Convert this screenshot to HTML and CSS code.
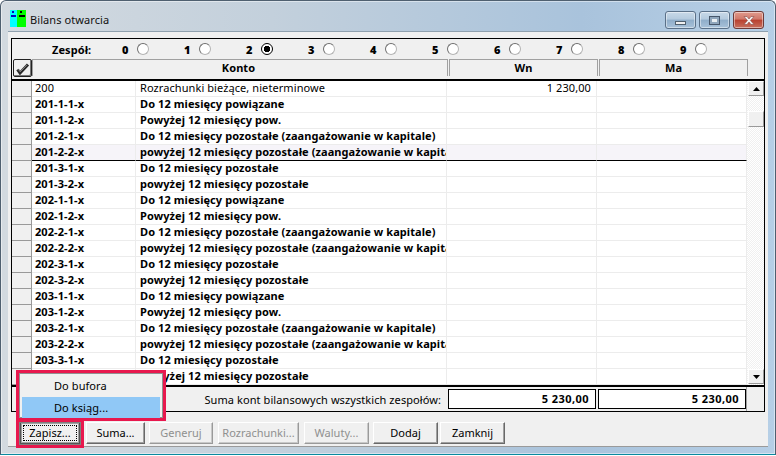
FILE: index.html
```html
<!DOCTYPE html>
<html lang="pl">
<head>
<meta charset="utf-8">
<title>Bilans otwarcia</title>
<link rel="stylesheet" href="styles.css">
</head>
<body>
<div class="window">
  <div class="titlebar">
    <svg class="appicon" width="17" height="17" viewBox="0 0 17 17"><rect width="7" height="17" fill="#00ffff"/><rect x="7" width="9" height="17" fill="#00ff00"/><rect x="2" y="1" width="2" height="2" fill="#0000c0"/><rect x="10" y="1" width="2" height="2" fill="#000"/><rect x="1" y="5" width="5" height="2" fill="#0000c0"/><rect x="9" y="5" width="6" height="2" fill="#000"/></svg>
    <span class="title">Bilans otwarcia</span>
    <div class="controls">
      <div class="ctl ctl-min"><span class="glyph-min"></span></div>
      <div class="ctl ctl-max"><span class="glyph-max"></span></div>
      <div class="ctl ctl-close"><svg width="18" height="11" viewBox="0 0 18 11"><path d="M4 1.5h3l2 2.500 2-2.500h3l-3.500 4 3.500 4h-3l-2-2.500-2 2.500H4l3.500-4z" fill="#f4f4f4" stroke="#8a4a44" stroke-width=".6"/></svg></div>
    </div>
  </div>
  <div class="client">
    <div class="panel">
      <div class="teams">
        <span class="teams-label">Zespół:</span>
        <span class="team"><b>0</b><i class="radio"></i></span>
        <span class="team"><b>1</b><i class="radio"></i></span>
        <span class="team"><b>2</b><i class="radio on"></i></span>
        <span class="team"><b>3</b><i class="radio"></i></span>
        <span class="team"><b>4</b><i class="radio"></i></span>
        <span class="team"><b>5</b><i class="radio"></i></span>
        <span class="team"><b>6</b><i class="radio"></i></span>
        <span class="team"><b>7</b><i class="radio"></i></span>
        <span class="team"><b>8</b><i class="radio"></i></span>
        <span class="team"><b>9</b><i class="radio"></i></span>
      </div>
      <div class="head">
        <div class="check"><svg width="15" height="13" viewBox="0 0 15 13"><path d="M2.500 7.500L5 11 13 2.500" fill="none" stroke="#2a2a2a" stroke-width="3"/><path d="M3.500 7.500L5.200 9.800 12 2.800" fill="none" stroke="#8c8c8c" stroke-width="1"/></svg></div>
        <div class="hcell h-konto">Konto</div>
        <div class="hcell h-num">Wn</div>
        <div class="hcell h-num">Ma</div>
      </div>
      <div class="gridwrap">
        <div class="rows">
          <div class="row plain"><i></i><span>200</span><span>Rozrachunki bieżące, nieterminowe</span><span class="num">1 230,00</span><span class="num"></span></div>
          <div class="row"><i></i><span>201-1-1-x</span><span>Do 12 miesięcy powiązane</span><span></span><span></span></div>
          <div class="row"><i></i><span>201-1-2-x</span><span>Powyżej 12 miesięcy pow.</span><span></span><span></span></div>
          <div class="row"><i></i><span>201-2-1-x</span><span>Do 12 miesięcy pozostałe (zaangażowanie w kapitale)</span><span></span><span></span></div>
          <div class="row current"><i></i><span>201-2-2-x</span><span>powyżej 12 miesięcy pozostałe (zaangażowanie w kapitale)</span><span></span><span></span></div>
          <div class="row"><i></i><span>201-3-1-x</span><span>Do 12 miesięcy pozostałe</span><span></span><span></span></div>
          <div class="row"><i></i><span>201-3-2-x</span><span>powyżej 12 miesięcy pozostałe</span><span></span><span></span></div>
          <div class="row"><i></i><span>202-1-1-x</span><span>Do 12 miesięcy powiązane</span><span></span><span></span></div>
          <div class="row"><i></i><span>202-1-2-x</span><span>Powyżej 12 miesięcy pow.</span><span></span><span></span></div>
          <div class="row"><i></i><span>202-2-1-x</span><span>Do 12 miesięcy pozostałe (zaangażowanie w kapitale)</span><span></span><span></span></div>
          <div class="row"><i></i><span>202-2-2-x</span><span>powyżej 12 miesięcy pozostałe (zaangażowanie w kapitale)</span><span></span><span></span></div>
          <div class="row"><i></i><span>202-3-1-x</span><span>Do 12 miesięcy pozostałe</span><span></span><span></span></div>
          <div class="row"><i></i><span>202-3-2-x</span><span>powyżej 12 miesięcy pozostałe</span><span></span><span></span></div>
          <div class="row"><i></i><span>203-1-1-x</span><span>Do 12 miesięcy powiązane</span><span></span><span></span></div>
          <div class="row"><i></i><span>203-1-2-x</span><span>Powyżej 12 miesięcy pow.</span><span></span><span></span></div>
          <div class="row"><i></i><span>203-2-1-x</span><span>Do 12 miesięcy pozostałe (zaangażowanie w kapitale)</span><span></span><span></span></div>
          <div class="row"><i></i><span>203-2-2-x</span><span>powyżej 12 miesięcy pozostałe (zaangażowanie w kapitale)</span><span></span><span></span></div>
          <div class="row"><i></i><span>203-3-1-x</span><span>Do 12 miesięcy pozostałe</span><span></span><span></span></div>
          <div class="row"><i></i><span>203-3-2-x</span><span>powyżej 12 miesięcy pozostałe</span><span></span><span></span></div>
        </div>
        <div class="scrollbar">
          <div class="sbtn"><svg width="7" height="4" viewBox="0 0 7 4"><path d="M3.500 0L7 4H0z"/></svg></div>
          <div class="thumb"></div>
          <div class="sbtn sbtn-down"><svg width="7" height="4" viewBox="0 0 7 4"><path d="M0 0h7L3.500 4z"/></svg></div>
        </div>
      </div>
      <div class="totals">
        <span class="totals-label">Suma kont bilansowych wszystkich zespołów:</span>
        <span class="total">5 230,00</span>
        <span class="total">5 230,00</span>
        <span class="totals-end"></span>
      </div>
    </div>
    <div class="buttons">
      <button class="btn b-zapisz focus"><span>Zapisz...</span></button>
      <button class="btn b-suma">Suma...</button>
      <button class="btn b-gen" disabled>Generuj</button>
      <button class="btn b-roz" disabled>Rozrachunki...</button>
      <button class="btn b-wal" disabled>Waluty...</button>
      <button class="btn b-dodaj">Dodaj</button>
      <button class="btn b-zamk">Zamknij</button>
    </div>
  </div>
</div>
<div class="menu">
  <div class="menu-item">Do bufora</div>
  <div class="menu-item selected">Do ksiąg...</div>
</div>
<div class="mark"></div>
</body>
</html>
```

FILE: styles.css
```css
* { box-sizing: border-box; }
html, body { margin: 0; padding: 0; background: #fff; }
body { width: 776px; height: 456px; position: relative; overflow: hidden; font-family: "Noto Sans", sans-serif; font-size: 11px; letter-spacing: .08px; color: #000; }
.window { width: 776px; height: 455px; display: flex; flex-direction: column; border: 1px solid #4f6070; border-bottom: 1px solid #0a8aa0; border-radius: 6px 6px 0 0; background: linear-gradient(90deg, #d3dae0 0, #c3d0dc 35%, #a9c3dc 75%, #b6cfe6 100%); padding: 0 7px 7px; box-shadow: inset 0 0 0 1px rgba(255,255,255,.45); }
.titlebar { height: 30px; flex: none; display: flex; align-items: flex-start; }
.appicon { margin: 9px 0 0 2px; flex: none; }
.title { margin: 11px 0 0 3px; line-height: 15px; color: #111; }
.controls { margin: 10px 4px 0 auto; display: flex; gap: 3px; }
.ctl { height: 18px; width: 31px; border: 1px solid #5a7088; border-radius: 3px; background: linear-gradient(#c8d9e8 0, #b4cade 45%, #8fadc9 50%, #a8c2da 100%); box-shadow: inset 0 0 0 1px rgba(255,255,255,.45); display: flex; align-items: center; justify-content: center; }
.ctl-close { border-color: #6e3a38; background: linear-gradient(#e09a8c 0, #d0786a 45%, #b8402f 50%, #c8705e 100%); }
.glyph-min { width: 11px; height: 4px; margin-top: 5px; background: #f0f0f0; border: 1px solid #50606e; }
.glyph-max { width: 11px; height: 9px; background: #e8eef2; border: 1px solid #46566a; box-shadow: inset 0 0 0 2px #8fa6bc; }
.client { flex: 1; background: #f0f0f0; border-top: 1px solid #8fa0ae; border-bottom: 1px solid #9a9a9a; padding: 6px 3px 0; }
.panel { border: 1px solid #000; width: 754px; }
.teams { height: 20px; display: flex; align-items: center; padding-left: 40px; font-weight: bold; }
.teams-label { width: 70px; }
.team { width: 62px; display: flex; align-items: center; flex: none; }
.team b { width: 15px; }
.radio { display: block; width: 12px; height: 12px; border-radius: 50%; background: #fff; border: 1px solid #6e6e6e; border-right-color: #b4b4b4; border-bottom-color: #b4b4b4; }
.radio.on { border: 1px solid #000; background: radial-gradient(circle, #000 0, #000 3px, #fff 3.5px); }
.head { height: 20px; display: flex; align-items: flex-start; }
.check { width: 19px; height: 18px; margin-left: 1px; background: #f0f0f0; border: 1px solid #222; border-radius: 2px; box-shadow: inset -1px -1px 0 #777; display: flex; align-items: center; justify-content: center; }
.hcell { height: 17px; border: 1px solid #a0a0a0; border-bottom: none; font-weight: bold; line-height: 16px; text-align: center; }
.h-konto { width: 416px; padding-right: 3px; }
.h-num { width: 149px; margin-left: 1px; }
.gridwrap { display: flex; border-top: 2px solid #000; }
.rows { width: 735px; flex: none; display: flex; flex-direction: column; }
.row { height: 16px; display: grid; grid-template-columns: 20px 104px 311px 150px 150px; background: #fff; font-weight: bold; line-height: 14px; }
.row span { padding: 0 3px; white-space: nowrap; overflow: hidden; border-right: 1px solid #ececec; border-bottom: 1px solid #ececec; }
.row span:nth-child(3) { padding-left: 4px; padding-right: 2px; }
.row i { display: block; background: #f0f0f0; border-right: 1px solid #999; border-bottom: 1px solid #999; }
.row.plain { font-weight: normal; }
.row .num { text-align: right; padding-right: 5px; }
.row.current { background: #f6f4f9; }
.row.current span { border-bottom-color: #000; }
.scrollbar { width: 17px; padding-left: 1px; display: flex; flex-direction: column; background: repeating-conic-gradient(#f0f0f0 0 25%, #fff 0 50%) 0 0 / 2px 2px; }
.sbtn { height: 15px; flex: none; background: #f0f0f0; border: 1px solid #9a9a9a; border-top-color: #fff; border-left-color: #fff; display: flex; align-items: center; justify-content: center; }
.sbtn-down { margin-top: auto; margin-bottom: 1px; }
.thumb { height: 16px; flex: none; margin-top: 15px; background: #f0f0f0; border: 1px solid #9a9a9a; border-top-color: #fff; border-left-color: #fff; }
.totals { height: 26px; border-top: 2px solid #000; display: flex; align-items: center; }
.totals-label { width: 431px; text-align: right; padding-right: 2px; flex: none; }
.total { width: 148px; height: 20px; flex: none; background: #fff; border: 1px solid #000; margin-left: 5px; font-weight: bold; letter-spacing: .45px; line-height: 18px; text-align: right; padding-right: 6px; }
.total + .total { margin-left: 2px; }
.totals-end { flex: 1; align-self: stretch; border-left: 1px solid #a0a0a0; }
.buttons { display: flex; margin: 10px 0 0 9px; height: 22px; }
.btn { height: 22px; padding: 0 0 1px; background: #f0f0f0; border: 1px solid #696969; border-top-color: #fff; border-left-color: #fff; box-shadow: inset -1px -1px 0 #a0a0a0; font: 11px "Noto Sans", sans-serif; color: #000; flex: none; }
.btn:disabled { color: #8f8f8f; border-bottom-color: #9a9a9a; border-right-color: #9a9a9a; box-shadow: inset -1px -1px 0 #c8c8c8; }
.b-zapisz { width: 60px; border-color: #555; box-shadow: inset 1px 1px 0 #a0a0a0, inset -1px -1px 0 #a0a0a0; }
.b-zapisz span { border: 1px dotted #000; display: block; margin: 2px; line-height: 14px; }
.b-suma { width: 59px; margin-left: 6px; }
.b-gen { width: 64px; margin-left: 4px; }
.b-roz { width: 81px; margin-left: 5px; }
.b-wal { width: 65px; margin-left: 5px; }
.b-dodaj { width: 65px; margin-left: 4px; }
.b-zamk { width: 65px; margin-left: 2px; }
.menu { position: absolute; left: 16px; top: 370px; width: 150px; height: 51px; background: #f0f0f0; border: 3px solid #e8184e; padding: 1px 3px 0; box-shadow: inset 0 0 0 1px #909090; }
.menu-item { height: 21px; line-height: 23px; padding-left: 32px; }
.menu-item.selected { background: #90c8f6; margin-top: 2px; line-height: 21px; }
.mark { position: absolute; left: 16px; top: 419px; width: 68px; height: 29px; border: 3px solid #e8184e; box-shadow: inset 0 0 0 1px #808080; pointer-events: none; }
```
